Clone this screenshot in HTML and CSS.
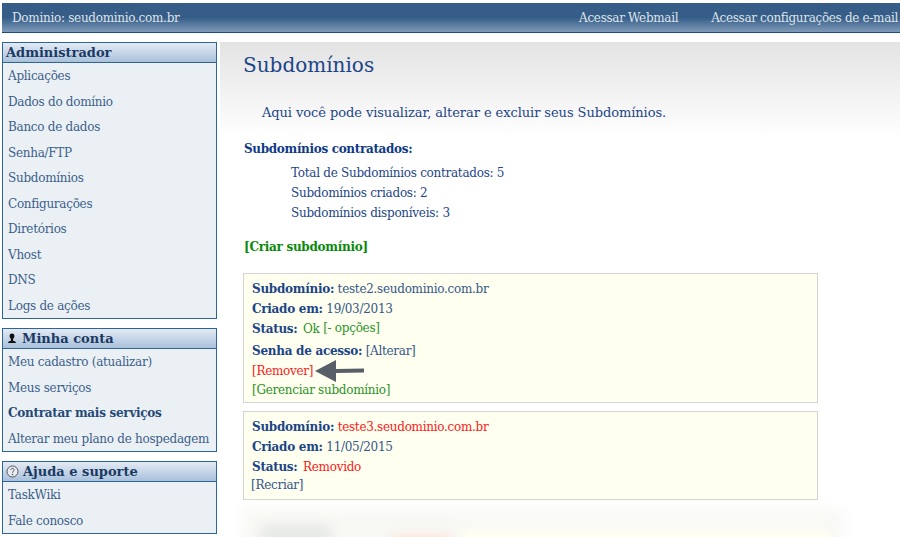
FILE: index.html
```html
<html lang="pt-BR">
<head>
  <meta charset="UTF-8">
  <title>Subdomínios</title>
  <link rel="stylesheet" href="styles.css">
</head>
<body>

  <div class="topbar">
    <div class="domain">Dominio: seudominio.com.br</div>
    <div class="toplinks">
      <a href="#">Acessar Webmail</a>
      <a href="#">Acessar configurações de e-mail</a>
    </div>
  </div>

  <div class="wrap">
    <div class="sidebar">
      <div class="panel">
        <div class="panel-head">Administrador</div>
        <ul class="first">
          <li>Aplicações</li>
          <li>Dados do domínio</li>
          <li>Banco de dados</li>
          <li>Senha/FTP</li>
          <li>Subdomínios</li>
          <li>Configurações</li>
          <li>Diretórios</li>
          <li>Vhost</li>
          <li>DNS</li>
          <li>Logs de ações</li>
        </ul>
      </div>
      <div class="panel">
        <div class="panel-head">
          <svg class="ico-user" width="12" height="12" viewBox="0 0 12 12"><path d="M6 0.500c1.700 0 2.400 1.100 2.400 2.600 0 1.300-.7 2.300-1.300 2.800v1.800c.9.300 2.700.5 3 2.300H1.900c.3-1.800 2.100-2 3-2.300V5.900C4.300 5.400 3.600 4.400 3.600 3.100 3.600 1.600 4.300.5 6 .5z" fill="#111"/></svg>
          Minha conta
        </div>
        <ul>
          <li>Meu cadastro (atualizar)</li>
          <li>Meus serviços</li>
          <li><b>Contratar mais serviços</b></li>
          <li>Alterar meu plano de hospedagem</li>
        </ul>
      </div>
      <div class="panel">
        <div class="panel-head">
          <svg class="ico-help" width="13" height="13" viewBox="0 0 13 13"><circle cx="6.500" cy="6.500" r="5.500" fill="#e8edf3" stroke="#555"/><path d="M4.800 5C4.800 4 5.600 3.400 6.500 3.400S8.200 4 8.200 4.900C8.200 6 6.500 6.100 6.500 7.700" fill="none" stroke="#555"/><circle cx="6.500" cy="9.500" r=".8" fill="#555"/></svg>
          Ajuda e suporte
        </div>
        <ul>
          <li>TaskWiki</li>
          <li>Fale conosco</li>
        </ul>
      </div>
    </div>

    <div class="main">
      <h1>Subdomínios</h1>
      <p class="intro">Aqui você pode visualizar, alterar e excluir seus Subdomínios.</p>

      <h2>Subdomínios contratados:</h2>
      <div class="totals">
        <div>Total de Subdomínios contratados: 5</div>
        <div>Subdomínios criados: 2</div>
        <div>Subdomínios disponíveis: 3</div>
      </div>

      <a class="create" href="#">[Criar subdomínio]</a>

      <div class="box">
        <div class="row"><b>Subdomínio:</b> teste2.seudominio.com.br</div>
        <div class="row"><b>Criado em:</b> 19/03/2013</div>
        <div class="row"><b class="status">Status:</b> <span class="green">Ok</span> <span class="green raised">[- opções]</span></div>
        <div class="row pass"><b>Senha de acesso:</b> [Alterar]</div>
        <div class="row remove">
          <span class="red">[Remover]</span>
          <svg class="arrow" width="52" height="24" viewBox="0 0 52 24"><path d="M1 12L22 1v9l28-.5v4l-28 .5v9z" fill="#585f68"/></svg>
        </div>
        <div class="row green manage">[Gerenciar subdomínio]</div>
      </div>

      <div class="box second">
        <div class="row"><b>Subdomínio:</b> <span class="red">teste3.seudominio.com.br</span></div>
        <div class="row"><b>Criado em:</b> 11/05/2015</div>
        <div class="row"><b class="status">Status:</b> <span class="red">Removido</span></div>
        <div class="recreate">[Recriar]</div>
      </div>

      <div class="smear">
        <div class="smear-grey"></div>
        <div class="smear-red"></div>
        <div class="smear-yellow"></div>
      </div>
    </div>
  </div>

</body>
</html>
```

FILE: styles.css
```css
html, body {
  height: 100%;
}
body {
  margin: 0;
  padding-top: 3px;
  box-sizing: border-box;
  background: white;
  color: #1c4587;
  font-family: "DejaVu Serif", serif;
  font-size: 12px;
  letter-spacing: -0.28px;
  overflow: hidden;
}
.topbar {
  display: flex;
  justify-content: space-between;
  align-items: center;
  height: 30px;
  margin-left: 2px;
  padding-left: 10px;
  box-sizing: border-box;
  background: linear-gradient(#355d88 0%, #355d88 50%, #7f9ab8 100%);
  border-bottom: 1px solid #1f4e7e;
  color: #dfe4ea;
}
.toplinks {
  display: flex;
  gap: 33px;
  padding-right: 2px;
  letter-spacing: -0.32px;
  white-space: nowrap;
}
.toplinks a {
  color: #dfe4ea;
  text-decoration: none;
}
.wrap {
  display: flex;
  margin-top: 9px;
  margin-left: 2px;
}
.sidebar {
  width: 215px;
  flex-shrink: 0;
}
.panel {
  background: #ebf0f5;
  border: 1px solid #2f6496;
  margin-bottom: 9px;
}
.panel-head {
  display: flex;
  align-items: center;
  gap: 4px;
  height: 20px;
  padding-left: 3px;
  box-sizing: border-box;
  background: linear-gradient(#e3eaf3, #a9c1dc);
  border-bottom: 1px solid #2f6496;
  color: #1b3a63;
  font-size: 13px;
  font-weight: bold;
  letter-spacing: 0;
  white-space: nowrap;
}
.panel ul {
  list-style: none;
  margin: 0;
  padding: 0;
}
.panel li {
  height: 25.5px;
  line-height: 26px;
  padding-left: 5px;
  color: #3b5f8a;
  white-space: nowrap;
}
.panel li b {
  color: #254a75;
}
.main {
  flex: 1;
  margin-left: 3px;
  padding: 0 23px;
  background: linear-gradient(#e3e3e3 0, white 95px);
}
h1 {
  margin: 0;
  padding-top: 10px;
  font-size: 20px;
  line-height: 26px;
  font-weight: normal;
  letter-spacing: 0;
  color: #1c4587;
}
.intro {
  margin: 26px 0 0 19px;
  font-size: 13px;
  letter-spacing: -0.07px;
  line-height: 18px;
}
h2 {
  margin: 19px 0 0 1px;
  font-size: 12px;
  letter-spacing: -0.33px;
  line-height: 16px;
  font-weight: bold;
  color: #0f3a85;
}
.totals {
  margin: 6px 0 0 48px;
  line-height: 20px;
}
.create {
  display: block;
  margin: 16px 0 0 1px;
  color: #0a8a0a;
  font-weight: bold;
  text-decoration: none;
  line-height: 16px;
}
.box {
  width: 575px;
  box-sizing: border-box;
  margin-top: 18px;
  padding: 5px 8px 0;
  height: 130px;
  background: #ffffef;
  border: 1px solid #d4d4d4;
  color: #34568a;
}
.box.second {
  margin-top: 8px;
  height: 89px;
}
.row {
  height: 20px;
  line-height: 20px;
}
.row b {
  color: #1c4587;
}
.row .status {
  margin-right: 2px;
}
.pass {
  margin-top: 2px;
}
.remove {
  display: flex;
  align-items: center;
}
.manage {
  line-height: 18px;
}
.arrow {
  margin-left: 1px;
}
.green {
  color: #2a922a;
}
.red {
  color: #fa2020;
}
.raised {
  position: relative;
  top: -1px;
}
.recreate {
  margin-left: -1px;
  line-height: 17px;
}
.smear {
  display: flex;
  align-items: flex-end;
  width: 600px;
  height: 40px;
  margin: 9px 0 -20px 0;
  padding-left: 18px;
  box-sizing: border-box;
  background: #f8f8f5;
  filter: blur(6px);
}
.smear-grey {
  width: 70px;
  height: 24px;
  background: #e6e9e6;
}
.smear-red {
  width: 60px;
  height: 12px;
  margin-left: 60px;
  background: #ffdccb;
}
.smear-yellow {
  width: 370px;
  height: 20px;
  margin-left: 10px;
  background: #fffff2;
}
```
